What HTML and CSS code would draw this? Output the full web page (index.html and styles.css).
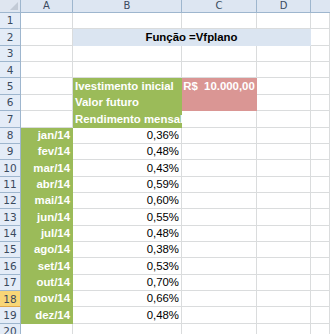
FILE: index.html
```html
<!DOCTYPE html>
<html>
<head>
<meta charset="utf-8">
<link rel="stylesheet" href="styles.css">
</head>
<body>
<div class="sheet">
  <div class="corner"><span class="tri"></span></div>
  <div class="ch">A</div><div class="ch">B</div><div class="ch">C</div><div class="ch">D</div><div class="ch last"></div>

  <div class="rh">1</div><div class="c"></div><div class="c"></div><div class="c"></div><div class="c"></div><div class="c"></div>
  <div class="rh">2</div><div class="c"></div><div class="c title">Função =Vfplano</div><div class="c"></div>
  <div class="rh">3</div><div class="c"></div><div class="c"></div><div class="c"></div><div class="c"></div><div class="c"></div>
  <div class="rh">4</div><div class="c"></div><div class="c"></div><div class="c"></div><div class="c"></div><div class="c"></div>
  <div class="rh">5</div><div class="c"></div><div class="c green left">Ivestimento inicial</div><div class="c red">R$&nbsp; 10.000,00</div><div class="c"></div><div class="c"></div>
  <div class="rh">6</div><div class="c"></div><div class="c green left">Valor futuro</div><div class="c"></div><div class="c"></div>
  <div class="rh">7</div><div class="c"></div><div class="c green left">Rendimento mensal</div><div class="c"></div><div class="c"></div><div class="c"></div>

  <div class="rh">8</div><div class="c green">jan/14</div><div class="c num">0,36%</div><div class="c"></div><div class="c"></div><div class="c"></div>
  <div class="rh">9</div><div class="c green">fev/14</div><div class="c num">0,48%</div><div class="c"></div><div class="c"></div><div class="c"></div>
  <div class="rh">10</div><div class="c green">mar/14</div><div class="c num">0,43%</div><div class="c"></div><div class="c"></div><div class="c"></div>
  <div class="rh">11</div><div class="c green">abr/14</div><div class="c num">0,59%</div><div class="c"></div><div class="c"></div><div class="c"></div>
  <div class="rh">12</div><div class="c green">mai/14</div><div class="c num">0,60%</div><div class="c"></div><div class="c"></div><div class="c"></div>
  <div class="rh">13</div><div class="c green">jun/14</div><div class="c num">0,55%</div><div class="c"></div><div class="c"></div><div class="c"></div>
  <div class="rh">14</div><div class="c green">jul/14</div><div class="c num">0,48%</div><div class="c"></div><div class="c"></div><div class="c"></div>
  <div class="rh">15</div><div class="c green">ago/14</div><div class="c num">0,38%</div><div class="c"></div><div class="c"></div><div class="c"></div>
  <div class="rh">16</div><div class="c green">set/14</div><div class="c num">0,53%</div><div class="c"></div><div class="c"></div><div class="c"></div>
  <div class="rh">17</div><div class="c green">out/14</div><div class="c num">0,70%</div><div class="c"></div><div class="c"></div><div class="c"></div>
  <div class="rh sel">18</div><div class="c green">nov/14</div><div class="c num">0,66%</div><div class="c"></div><div class="c"></div><div class="c"></div>
  <div class="rh">19</div><div class="c green">dez/14</div><div class="c num">0,48%</div><div class="c"></div><div class="c"></div><div class="c"></div>
  <div class="rh">20</div><div class="c"></div><div class="c"></div><div class="c"></div><div class="c"></div><div class="c"></div>
</div>
</body>
</html>
```
FILE: styles.css
```css
html, body {
  margin: 0;
  padding: 0;
  background: #ffffff;
  overflow: hidden;
}
.sheet {
  display: grid;
  grid-template-columns: 21px 52px 109px 75px 54px 1fr;
  grid-template-rows: 13px repeat(20, 16.37px);
  width: 330px;
  height: 334px;
  overflow: hidden;
  font-family: "Liberation Sans", Arial, sans-serif;
  font-size: 11.4px;
  color: #000;
}
.corner {
  background: #dfe6f0;
  border-right: 1px solid #9eb6ce;
  border-bottom: 1px solid #9eb6ce;
  position: relative;
}
.tri {
  position: absolute;
  right: 2px;
  bottom: 2px;
  width: 0;
  height: 0;
  border-left: 8px solid transparent;
  border-bottom: 8px solid #c2cad5;
}
.ch {
  background: #dde6f2;
  border-right: 1px solid #9eb6ce;
  border-bottom: 1px solid #9eb6ce;
  color: #3a4a5e;
  font-family: "DejaVu Sans", sans-serif;
  font-size: 10px;
  display: flex;
  align-items: center;
  justify-content: center;
  line-height: 1;
}
.ch.last { border-right: none; }
.rh {
  background: #e4ecf7;
  border-right: 1px solid #9eb6ce;
  border-bottom: 1px solid #9eb6ce;
  color: #3a4a5e;
  font-family: "DejaVu Sans", sans-serif;
  font-size: 10.5px;
  display: flex;
  align-items: center;
  justify-content: center;
  line-height: 1;
}
.rh.sel {
  background: #f8d677;
  border-bottom-color: #e0a74a;
}
.c {
  border-right: 1px solid #dadcdd;
  border-bottom: 1px solid #dadcdd;
  display: flex;
  align-items: flex-end;
  justify-content: flex-end;
  padding: 0 2px 1px 2px;
  white-space: nowrap;
  overflow: visible;
  line-height: 14px;
  min-width: 0;
}
.title {
  grid-column: span 3;
  background: #dbe5f1;
  border-color: #dbe5f1;
  justify-content: center;
  font-weight: bold;
}
.green {
  background: #9bbb59;
  border-color: #9bbb59;
  color: #fff;
  font-weight: bold;
}
.left { justify-content: flex-start; }
.red {
  grid-row: span 2;
  background: #da9694;
  border-color: #da9694;
  color: #fff;
  font-weight: bold;
  align-items: flex-start;
  justify-content: center;
  padding-top: 1px;
}
.num { }
```
